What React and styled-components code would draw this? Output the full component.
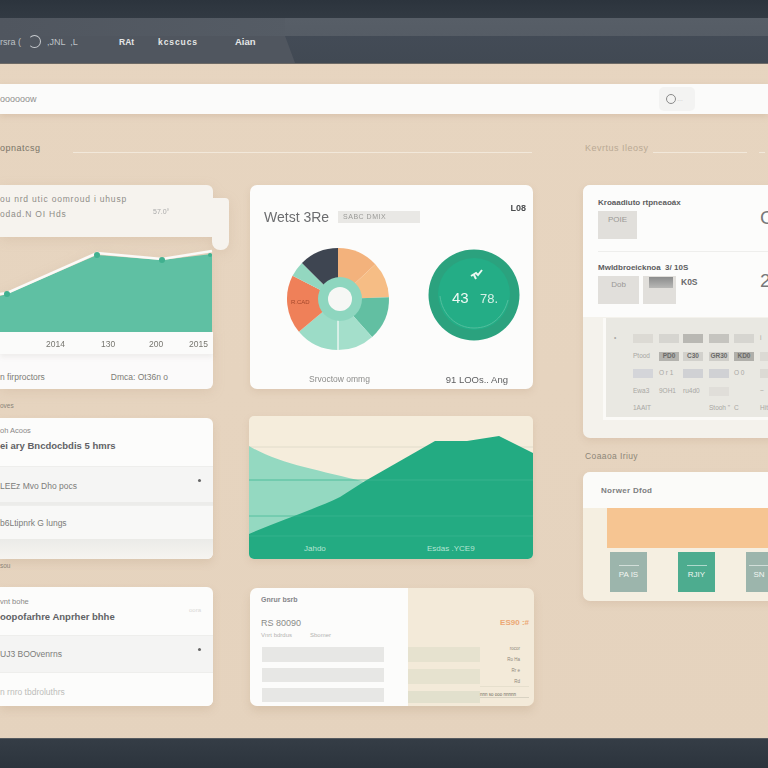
import React from "react";
import styled, { createGlobalStyle } from "styled-components";

const Global = createGlobalStyle`
  html, body { margin: 0; padding: 0; background: #e6d4bf; }
  * { box-sizing: border-box; }
`;

const Page = styled.div`
  width: 768px; height: 768px; overflow: hidden;
  display: flex; flex-direction: column;
  font-family: "Liberation Sans", Arial, sans-serif;
  background: linear-gradient(180deg, #e7d5c0 0%, #e5d3be 100%);
  color: #55585c;
  filter: blur(0.45px);
`;
const TopBar = styled.div`height: 18px; flex: none; background: linear-gradient(180deg,#2c343d,#323a43);`;
const Nav = styled.nav`
  height: 46px; flex: none; display: flex; align-items: center;
  background: linear-gradient(180deg,#575e67 0,#555c65 18px,#434b56 18px,#414953 100%);
  border-bottom: 1px solid #6d6a66;
`;
const NavLeft = styled.div`
  width: 295px; height: 100%; flex: none; display: flex; align-items: center; padding-top: 2px;
  background: linear-gradient(90deg,#50565f 0,#555c65 100%) top / 100% 18px no-repeat, linear-gradient(#50565f,#50565f);
  clip-path: polygon(0 0, 285px 0, 285px 18px, 295px 100%, 0 100%);
  color: #d9dbdc;
`;
const Logo = styled.span`
  width: 119px; flex: none; display: flex; align-items: center; gap: 4px;
  font-size: 9px; color: #bfc3c7; white-space: pre;
`;
const LogoRing = styled.span`
  width: 13px; height: 13px; border-radius: 50%; border: 1.5px solid #c9ccd0; flex: none;
  border-left-color: transparent;
`;
const NavItem = styled.span`
  font-size: ${p => p.$size || 8.5}px; font-weight: 700; color: #e5e6e7; margin-right: ${p => p.$gap}px;
  letter-spacing: ${p => p.$track || 0}px;
`;
const Main = styled.main`flex: 1; min-height: 0; padding-top: 20px; overflow: hidden;`;
const SearchBar = styled.div`
  height: 30px; background: #fbfbfa; display: flex; align-items: center; justify-content: space-between;
  padding-right: 73px; box-shadow: 0 2px 6px rgba(170,140,110,.25);
  font-size: 9px; color: #8f8f8d;
`;
const SearchChip = styled.div`
  width: 36px; height: 24px; border-radius: 5px; background: #f3f3f2; display: flex; align-items: center;
  padding-left: 7px; gap: 1px; font-size: 6px; color: #aaa;
`;
const SearchRing = styled.span`width: 10px; height: 10px; border-radius: 50%; border: 1.5px solid #8a8a8a;`;
const LabelGrid = styled.div`
  display: grid; grid-template-columns: 532px 185px; column-gap: 53px; height: 20px; margin-top: 24px; 
`;
const LabelRow = styled.div`display: flex; align-items: center; height: 20px; gap: ${p => p.$gap || 4}px;`;
const SectionLabel = styled.span`
  font-size: 9px; letter-spacing: .5px; white-space: nowrap; color: ${p => p.$light ? "#b9a994" : "#7a7468"}; flex: none;
  width: ${p => p.$w ? p.$w + "px" : "auto"};
`;
const Rule = styled.span`height: 1px; background: #f2e8da; flex: ${p => p.$w ? "none" : 1}; width: ${p => p.$w || 0}px; margin-top: 9px; margin-left: ${p => p.$gap || 0}px;`;
const Columns = styled.div`
  display: grid; grid-template-columns: 213px 283px 210px; column-gap: 37px; margin-top: 27px; align-items: start;
  & > *:last-child { margin-left: 13px; }
`;
const Stack = styled.div`display: flex; flex-direction: column;`;

/* first card */
const TrendCard = styled.section`position: relative; height: 204px; display: flex; flex-direction: column; filter: drop-shadow(0 3px 6px rgba(170,140,110,.18));`;
const Note = styled.div`
  height: 52px; background: #f6f3ee; border-radius: 0 6px 0 0; padding: 9px 0 0 0; display: flex; flex-direction: column; gap: 5px;
  font-size: 8.5px; color: #8f8d88; position: relative; letter-spacing: .8px;
`;
const NoteTail = styled.span`
  position: absolute; left: 212px; top: 13px; width: 17px; height: 52px; background: #f6f3ee; border-radius: 0 4px 8px 8px;
`;
const NoteValue = styled.span`position: absolute; left: 153px; top: 23px; font-size: 7px; color: #aaa; letter-spacing: 0;`;
const PlotSvg = styled.svg`display: block; width: 213px; height: 95px; flex: none;`;
const AxisRow = styled.div`
  height: 22px; background: #fbfbfa; display: block; position: relative; font-size: 8.5px; color: #77766f;
  box-shadow: 0 3px 5px rgba(150,140,130,.12); z-index: 1;
`;
const AxisTick = styled.span`position: absolute; left: ${p => p.$x}px; top: 7px;`;
const TrendFoot = styled.div`
  flex: 1; background: #fbfafa; border-radius: 0 0 6px 0; display: flex; justify-content: space-between; align-items: center;
  padding: 10px 45px 0 0; font-size: 8.5px; color: #7d7c76;
`;
const SmallLabel = styled.div`height: ${p => p.$h}px; padding-top: ${p => p.$top}px; font-size: 6.5px; color: #8b8478;`;

/* list cards */
const ListCard = styled.section`
  height: ${p => p.$h}px; background: #fcfcfb; border-radius: 0 6px 6px 0; box-shadow: 0 4px 8px rgba(170,140,110,.2);
  display: flex; flex-direction: column; overflow: hidden;
`;
const ListHead = styled.div`height: 48px; flex: none; padding-top: ${p => p.$top || 8}px; display: flex; flex-direction: column; gap: 5px; position: relative;`;
const ListEyebrow = styled.span`font-size: 7.5px; color: #8a8987;`;
const ListTitle = styled.span`font-size: 9.5px; font-weight: 700; color: #616265; white-space: nowrap;`;
const ListHint = styled.span`position: absolute; right: 12px; top: 20px; font-size: 6px; color: #d8d8d6;`;
const ListRow = styled.div`
  height: ${p => p.$h}px; flex: none; background: ${p => p.$bg}; display: flex; align-items: center; justify-content: space-between;
  padding-right: 12px; padding-top: ${p => p.$top || 0}px; font-size: 8.5px; color: ${p => p.$dim ? "#bcbcba" : "#7c7c7a"};
  border-top: 1px solid #eeeeec; border-bottom: ${p => p.$line ? "3px solid #ececea" : "0"};
  white-space: nowrap;
`;
const Dot = styled.span`width: 3px; height: 3px; border-radius: 50%; background: ${p => p.$c || "#666"}; margin-top: -10px;`;
const Fade = styled.div`flex: 1; background: linear-gradient(180deg,#ebebe8,#f6f4f0);`;

/* middle column */
const DonutCard = styled.section`
  height: 204px; background: #fcfcfb; border-radius: 7px; box-shadow: 0 3px 7px rgba(170,140,110,.18);
  position: relative; overflow: hidden;
`;
const DonutHead = styled.div`display: flex; align-items: center; gap: 9px; padding: 17px 0 0 14px; height: 46px;`;
const DonutTitle = styled.span`font-family: "Liberation Sans",Arial,sans-serif; font-size: 14px; color: #6c6d6f;`;
const DonutTag = styled.span`
  width: 82px; height: 12px; background: #e9e8e5; font-size: 7px; color: #9a9a97; padding: 2px 5px; letter-spacing: .5px;
`;
const DonutCorner = styled.span`position: absolute; right: 7px; top: 18px; font-size: 9px; font-weight: 700; color: #4c4e50;`;
const DonutVisuals = styled.div`display: flex; align-items: flex-start; padding: 16px 0 0 36px; gap: 38px;`;
const GaugeSlot = styled.div`margin-top: 2px;`;
const DonutFoot = styled.div`
  position: absolute; left: 59px; right: 25px; bottom: 4px; display: flex; justify-content: space-between; font-size: 8.5px; color: #8d8d8b;
`;
const DonutFootRight = styled.span`font-size: 9.5px; color: #5f6062;`;
const ChartBox = styled.div`height: 143px; margin: 27px 0 29px -1px; width: 284px; border-radius: 5px; overflow: hidden; box-shadow: 0 3px 7px rgba(170,140,110,.18);`;
const ChartSvg = styled.svg`display: block;`;
const SplitCard = styled.section`
  height: 118px; width: 284px; display: grid; grid-template-columns: 158px 1fr; border-radius: 7px; overflow: hidden;
  box-shadow: 0 5px 9px rgba(170,140,110,.22);
`;
const SplitLeft = styled.div`background: #fcfcfb; padding: 8px 12px 0 12px;`;
const SplitEyebrow = styled.div`font-size: 7px; font-weight: 700; color: #85858a; margin-left: -1px;`;
const SplitValue = styled.div`font-size: 9px; color: #8a8a88; margin-top: 15px; margin-left: -1px;`;
const SplitMeta = styled.div`display: flex; gap: 18px; font-size: 6px; color: #b4b4b2; margin-top: 4px; margin-left: -1px;`;
const BarStack = styled.div`display: flex; flex-direction: column; gap: ${p => p.$gap}px; margin-top: ${p => p.$top}px;`;
const GreyBar = styled.div`height: ${p => p.$h}px; width: ${p => p.$w}px; background: ${p => p.$c};`;
const SplitRight = styled.div`background: #f3ead9; position: relative;`;
const SplitPrice = styled.span`position: absolute; right: 5px; top: 30px; font-size: 8px; font-weight: 700; color: #eca874;`;
const MiniText = styled.div`
  position: absolute; right: 14px; top: 58px; display: flex; flex-direction: column; gap: 6px; align-items: flex-end;
  font-size: 4.5px; color: #8e877a;
`;
const MiniFoot = styled.div`position: absolute; left: 72px; right: 5px; bottom: 8px; font-size: 4.5px; color: #6e6a60; border-top: 1px solid #e6dfcd; padding-top: 5px; white-space: nowrap; border-bottom: 1px solid #d8d2c2;`;

/* right column */
const DetailCard = styled.section`
  height: 253px; width: 200px; border-radius: 7px 0 0 7px; background: #f4f2ec; overflow: hidden; box-shadow: 0 3px 7px rgba(170,140,110,.18);
`;
const DetailTop = styled.div`height: 132px; background: #fcfcfb; padding: 13px 0 0 15px; position: relative; display: flex; flex-direction: column;`;
const DetailTitle = styled.div`font-size: 8px; font-weight: 700; color: #5c5d60; white-space: nowrap;`;
const ThumbRow = styled.div`display: flex; gap: 4px; margin-top: 4px; align-items: flex-start;`;
const Thumb = styled.div`
  width: ${p => p.$w}px; height: 28px; background: #e1dfdb; font-size: 8px; color: #9a9895; padding: 4px 0 0 0; text-align: center;
`;
const ThumbDark = styled.div`
  width: 33px; height: 28px; background: #e1dfdb; padding: 1px 3px 0 6px;
`;
const ThumbStrip = styled.div`height: 11px; background: linear-gradient(180deg,#8b8c8c,#b8b8b6);`;
const ThumbValue = styled.span`font-size: 8.5px; font-weight: 700; color: #69696a; margin-left: 1px; margin-top: 1px;`;
const Divider = styled.div`height: 1px; width: 170px; background: #eeeeec; margin: 12px 0 11px;`;
const BigGlyph = styled.span`position: absolute; left: 177px; top: ${p => p.$t}px; font-size: 19px; color: #77787a;`;
const TablePanel = styled.div`
  margin: 1px 0 0 20px; height: 102px; background: #e9e8e2; border-left: 3px solid #fbfaf7; border-bottom: 3px solid #fbfaf7;
  padding: 16px 0 0 8px; display: grid; grid-template-columns: 19px 26px 24px 26px 25px 26px 20px; grid-auto-rows: 17.5px;
  font-size: 6.5px; color: #a8a7a2; white-space: nowrap; overflow: hidden;
`;
const Cell = styled.span`
  display: block; height: ${p => p.$block ? "9px" : "auto"}; width: 20px;
  background: ${p => p.$block || "transparent"};
  color: ${p => p.$dark ? "#6a6a68" : "inherit"}; font-weight: ${p => p.$dark ? 700 : 400};
  text-align: ${p => p.$dark ? "center" : "left"};
`;
const SectionSub = styled.div`height: 34px; padding-top: 13px; font-size: 8.5px; color: #8d8678; margin-left: 2px; letter-spacing: .4px;`;
const PlanCard = styled.section`
  height: 129px; width: 200px; border-radius: 7px 0 0 7px; background: #f5efe1; overflow: hidden; box-shadow: 0 3px 7px rgba(170,140,110,.18);
`;
const PlanHead = styled.div`height: 36px; background: #fbfbf9; padding: 14px 0 0 18px; font-size: 8px; font-weight: 700; color: #7d7e80; letter-spacing: .3px;`;
const PlanBand = styled.div`height: 40px; margin-left: 24px; background: #f6c592;`;
const Tiles = styled.div`display: flex; gap: 31px; padding: 4px 0 0 27px;`;
const Tile = styled.div`
  width: ${p => p.$w || 37}px; height: 40px; flex: none; background: ${p => p.$c}; color: #f2f5f2; display: flex; flex-direction: column; align-items: center;
  justify-content: center; gap: 4px; font-size: 8px;
`;
const TileLine = styled.span`width: 20px; height: 1px; background: rgba(255,255,255,.55);`;
const PageFoot = styled.div`height: 30px; flex: none; background: linear-gradient(180deg,#353d46,#2c343d); border-top: 1px solid #555a5f;`;

function polar(cx, cy, r, deg) {
  const a = (deg - 90) * Math.PI / 180;
  return [cx + r * Math.cos(a), cy + r * Math.sin(a)];
}
function Slice({ from, to, fill }) {
  const [x1, y1] = polar(52, 52, 51, from);
  const [x2, y2] = polar(52, 52, 51, to);
  const large = to - from > 180 ? 1 : 0;
  return <path d={`M52 52L${x1} ${y1}A51 51 0 ${large} 1 ${x2} ${y2}Z`} fill={fill} />;
}
const slices = [
  [0, 47, "#f3b27c"], [47, 88, "#f6bd85"], [88, 138, "#62bfa2"], [138, 180, "#a4dfcb"],
  [180, 230, "#9cdcc7"], [230, 297, "#ef8059"], [297, 315, "#93d7c0"], [315, 360, "#3e4551"],
];

function Donut() {
  return (
    <svg width="104" height="104" viewBox="0 0 104 104">
      {slices.map(s => <Slice key={s[0]} from={s[0]} to={s[1]} fill={s[2]} />)}
      <line x1="52" y1="72" x2="52" y2="104" stroke="#fcfcfb" strokeWidth="1.2" />
      <circle cx="54" cy="52" r="22" fill="#8ed6bf" />
      <circle cx="54" cy="52" r="12" fill="#f6f7f5" />
      <text x="5" y="57" fontSize="6" fill="#a5482c" fontFamily="Liberation Sans">R.CAD</text>
    </svg>
  );
}
function Gauge() {
  return (
    <svg width="92" height="92" viewBox="0 0 92 92">
      <circle cx="46" cy="46" r="45.5" fill="#2ba27e" />
      <circle cx="46" cy="45" r="36" fill="#24ad86" />
      <path d="M12 47c2 18 16 32 34 32s30-12 34-28" fill="none" stroke="#5cc2a3" strokeWidth="1" opacity=".8" />
      <path d="M43 27l5-3 2 2 4-5M46 26l2 4" fill="none" stroke="#eaf7f1" strokeWidth="2" />
      <text x="24" y="54" fontSize="15" fill="#eef9f4" fontFamily="Liberation Sans">43</text>
      <text x="52" y="54" fontSize="13" fill="#d6f0e6" fontFamily="Liberation Sans">78.</text>
    </svg>
  );
}
const tableRows = [
  ["•", "b:#dcdad4", "b:#d6d5d0", "b:#b9b8b3", "b:#c5c4bf", "b:#d6d5d0", "i"],
  ["", "Ptood", "d:#b4b3ae|PD0", "d:#d2d1cc|C30", "d:#cfcec9|GR30", "d:#b0afaa|KD0", "b:#dcdad4"],
  ["", "b:#d4d5d9", "O r 1", "b:#d0d1d4", "b:#d0d1d4", "O 0", "b:#dcdad4"],
  ["", "Ewa3", "9OH1", "ru4d0", "b:#e0ded9", "", "~"],
  ["", "1AAIT", "", "", "Stooh \"", "C", "Hit"],
];

export default function App() {
  return (
    <Page>
      <Global />
      <TopBar />
      <Nav>
        <NavLeft>
          <Logo>rsra ( <LogoRing /> ,JNL  ,L</Logo>
          <NavItem $gap={24}>RAt</NavItem>
          <NavItem $gap={37} $track={0.9}>kcscucs</NavItem>
          <NavItem $gap={0} $size={9.5}>Aian</NavItem>
        </NavLeft>
      </Nav>
      <Main>
        <SearchBar>
          <span>oooooow</span>
          <SearchChip><SearchRing />…</SearchChip>
        </SearchBar>
        <LabelGrid>
          <LabelRow $gap={25}><SectionLabel $w={48}>opnatcsg</SectionLabel><Rule /></LabelRow>
          <LabelRow><SectionLabel $light>Kevrtus Ileosy</SectionLabel><Rule $w={94} /><Rule $w={6} $gap={8} /></LabelRow>
        </LabelGrid>
        <Columns>
          <Stack>
            <TrendCard>
              <Note>
                <span>ou nrd utic oomroud i uhusp</span>
                <span>odad.N OI Hds</span>
                <NoteValue>57.0°</NoteValue>
                <NoteTail />
              </Note>
              <PlotSvg viewBox="0 0 213 95">
                <path d="M0 59L7 57L97 18L162 23L212 17V95H0Z" fill="#5fc0a3" />
                <path d="M0 57L7 56L97 16L162 22L212 14" fill="none" stroke="#fbfaf8" strokeWidth="2.5" />
                <circle cx="7" cy="57" r="3" fill="#41b08f" />
                <circle cx="97" cy="18" r="3" fill="#41b08f" />
                <circle cx="162" cy="23" r="3" fill="#41b08f" />
                <circle cx="210" cy="18" r="2" fill="#41b08f" />
              </PlotSvg>
              <AxisRow>
                <AxisTick $x={46}>2014</AxisTick>
                <AxisTick $x={101}>130</AxisTick>
                <AxisTick $x={149}>200</AxisTick>
                <AxisTick $x={189}>2015</AxisTick>
              </AxisRow>
              <TrendFoot><span>n firproctors</span><span>Dmca: Ot36n o</span></TrendFoot>
            </TrendCard>
            <SmallLabel $h={29} $top={13}>oves</SmallLabel>
            <ListCard $h={141}>
              <ListHead>
                <ListEyebrow>oh Acoos</ListEyebrow>
                <ListTitle>ei ary Bncdocbdis 5 hmrs</ListTitle>
              </ListHead>
              <ListRow $h={39} $bg="#f5f5f4" $line $top={2}><span>LEEz Mvo Dho pocs</span><Dot /></ListRow>
              <ListRow $h={34} $bg="#f8f8f7"><span>b6Ltipnrk G lungs</span></ListRow>
              <Fade />
            </ListCard>
            <SmallLabel $h={28} $top={3}>sou</SmallLabel>
            <ListCard $h={119}>
              <ListHead $top={10}>
                <ListEyebrow>vnt bohe</ListEyebrow>
                <ListTitle>oopofarhre Anprher bhhe</ListTitle>
                <ListHint>oora</ListHint>
              </ListHead>
              <ListRow $h={37} $bg="#f4f4f3"><span>UJ3 BOOvenrns</span><Dot /></ListRow>
              <ListRow $h={34} $bg="#fcfcfb" $dim $top={4}><span>n rnro tbdroluthrs</span></ListRow>
            </ListCard>
          </Stack>
          <Stack>
            <DonutCard>
              <DonutHead>
                <DonutTitle>Wetst 3Re</DonutTitle>
                <DonutTag>SABC DMIX</DonutTag>
              </DonutHead>
              <DonutCorner>L08</DonutCorner>
              <DonutVisuals>
                <Donut />
                <GaugeSlot><Gauge /></GaugeSlot>
              </DonutVisuals>
              <DonutFoot><span>Srvoctow ommg</span><DonutFootRight>91 LOOs.. Ang</DonutFootRight></DonutFoot>
            </DonutCard>
            <ChartBox>
              <ChartSvg width="284" height="143" viewBox="0 0 284 143">
                <rect width="284" height="143" fill="#f5eddc" />
                <line x1="0" x2="284" y1="31" y2="31" stroke="#e1dccb" />
                <path d="M0 30C30 48 70 54 116 66L60 120H0Z" fill="#94d9c1" />
                <path d="M0 118C32 104 64 94 91 81L116 65L186 25L218 25L250 20L284 37V143H0Z" fill="#23ab82" />
                <line x1="0" x2="284" y1="64" y2="64" stroke="#3cb692" strokeOpacity=".8" />
                <line x1="0" x2="284" y1="100" y2="100" stroke="#3cb692" strokeOpacity=".7" />
                <line x1="0" x2="284" y1="120" y2="120" stroke="#3cb692" strokeOpacity=".7" />
                <text x="55" y="135" fontSize="8" fill="#b5e5d3" fontFamily="Liberation Sans">Jahdo</text>
                <text x="178" y="135" fontSize="8" fill="#b5e5d3" fontFamily="Liberation Sans">Esdas .YCE9</text>
              </ChartSvg>
            </ChartBox>
            <SplitCard>
              <SplitLeft>
                <SplitEyebrow>Gnrur bsrb</SplitEyebrow>
                <SplitValue>RS 80090</SplitValue>
                <SplitMeta><span>Vnrt bdrdus</span><span>Sbomer</span></SplitMeta>
                <BarStack $gap={6} $top={9}>
                  <GreyBar $h={15} $w={122} $c="#e7e7e5" />
                  <GreyBar $h={14} $w={122} $c="#e7e7e5" />
                  <GreyBar $h={14} $w={122} $c="#e7e7e5" />
                </BarStack>
              </SplitLeft>
              <SplitRight>
                <SplitPrice>ES90 :#</SplitPrice>
                <BarStack $gap={7} $top={59}>
                  <GreyBar $h={15} $w={72} $c="#e6e2cf" />
                  <GreyBar $h={15} $w={72} $c="#e6e2cf" />
                  <GreyBar $h={12} $w={72} $c="#e2e0cd" />
                </BarStack>
                <MiniText><span>rocor</span><span>Ro Ha</span><span>Rr e</span><span>Rd</span></MiniText>
                <MiniFoot>nnn so ooo nnnnn</MiniFoot>
              </SplitRight>
            </SplitCard>
          </Stack>
          <Stack>
            <DetailCard>
              <DetailTop>
                <DetailTitle>Kroaadiuto rtpneaoáx</DetailTitle>
                <ThumbRow><Thumb $w={39}>POIE</Thumb></ThumbRow>
                <BigGlyph $t={22}>C</BigGlyph>
                <Divider />
                <DetailTitle>Mwldbroeicknoa &nbsp;3/ 10S</DetailTitle>
                <ThumbRow>
                  <Thumb $w={41}>Dob</Thumb>
                  <ThumbDark><ThumbStrip /></ThumbDark>
                  <ThumbValue>K0S</ThumbValue>
                </ThumbRow>
                <BigGlyph $t={85}>2</BigGlyph>
              </DetailTop>
              <TablePanel>
                {tableRows.flat().map((c, i) => {
                  if (c.startsWith("b:")) return <Cell key={i} $block={c.slice(2)} />;
                  if (c.startsWith("d:")) {
                    const [bg, t] = c.slice(2).split("|");
                    return <Cell key={i} $block={bg} $dark>{t}</Cell>;
                  }
                  return <Cell key={i}>{c}</Cell>;
                })}
              </TablePanel>
            </DetailCard>
            <SectionSub>Coaaoa Iriuy</SectionSub>
            <PlanCard>
              <PlanHead>Norwer Dfod</PlanHead>
              <PlanBand />
              <Tiles>
                <Tile $c="#9cb5ac"><TileLine />PA IS</Tile>
                <Tile $c="#4dac8f"><TileLine />RJIY</Tile>
                <Tile $c="#9cb5ac" $w={26}><TileLine />SN</Tile>
              </Tiles>
            </PlanCard>
          </Stack>
        </Columns>
      </Main>
      <PageFoot />
    </Page>
  );
}
